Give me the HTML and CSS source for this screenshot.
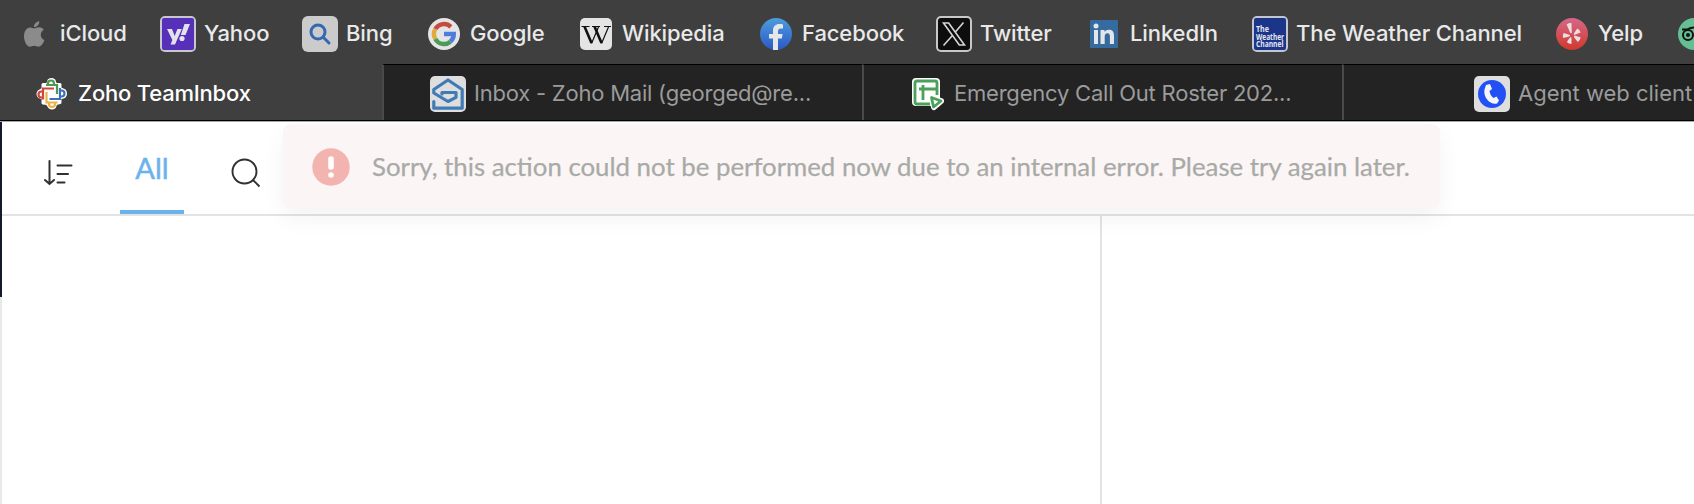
FILE: index.html
```html
<!DOCTYPE html>
<html lang="en">
<head>
<meta charset="utf-8">
<title>Zoho TeamInbox</title>
<link rel="stylesheet" href="styles.css">
</head>
<body>
<nav class="favorites">
  <a class="fav fav-icloud"><svg class="ico" viewBox="0 0 36 36"><path fill="#8b8b8b" d="M23.300 5.200C23.500 8.300 21 11.200 18 11.100C17.700 8.200 20.400 5.400 23.300 5.200ZM18.200 12.500C19.500 12.500 21 11.300 23.200 11.300C25.200 11.300 26.800 12.300 27.800 13.700C23.400 16.300 24 22.100 28.400 24C27.200 27.200 25.200 30.700 22.700 30.700C21 30.700 20.300 29.700 18.300 29.700C16.200 29.700 15.500 30.700 13.900 30.700C10.900 30.700 8 25.200 8 20.200C8 15.200 10.700 11.500 14 11.500C15.800 11.500 17.200 12.500 18.200 12.500Z"/></svg><span>iCloud</span></a>
  <a class="fav fav-yahoo"><svg class="ico" viewBox="0 0 36 36"><rect width="36" height="36" rx="5" fill="#c9c6d0"/><rect x="2" y="2" width="32" height="32" rx="2" fill="#5630b8"/><path fill="#e4e1ec" d="M7 13h5l2.700 7 2.700-7h4.400L15 28.500h-4.500l1.900-4.500zM24.500 8H30l-4.500 11h-4.700z"/><circle cx="22" cy="22.500" r="2.600" fill="#e4e1ec"/></svg><span>Yahoo</span></a>
  <a class="fav fav-bing"><svg class="ico" viewBox="0 0 36 36"><rect width="36" height="36" rx="6" fill="#cbcbcb"/><g fill="none" stroke="#3468b0" stroke-width="3"><circle cx="16" cy="16" r="7"/><path stroke-linecap="round" d="M21 21l6 6"/></g></svg><span>Bing</span></a>
  <a class="fav fav-google"><svg class="ico" viewBox="0 0 36 36"><circle cx="18" cy="18" r="16" fill="#e5e5e5"/><g fill="none" stroke-width="4.400"><path stroke="#c44c3e" d="M24.900 10.800A10 10 0 0 0 9.300 13"/><path stroke="#dfab3d" d="M9.300 13a10 10 0 0 0 0 10"/><path stroke="#4b9b57" d="M9.300 23a10 10 0 0 0 15.100 2.700"/><path stroke="#4f7ddd" d="M24.400 25.700A10 10 0 0 0 27.800 18H18"/></g></svg><span>Google</span></a>
  <a class="fav fav-wikipedia"><svg class="ico" viewBox="0 0 36 36"><rect x="2" y="2" width="32" height="32" rx="5" fill="#e4e4e4"/><g fill="none" stroke="#111"><path stroke-width="1.200" d="M3.500 10.500h8M14 10.500h8M26 10.500h7M13.500 27.500L20.500 11M23.500 27.500L30.500 11"/><path stroke-width="2.600" d="M6.500 10.500l7 16.500M16.500 10.500l7 16.500"/></g></svg><span>Wikipedia</span></a>
  <a class="fav fav-facebook"><svg class="ico" viewBox="0 0 36 36"><defs><linearGradient id="fb" x2="0" y2="1"><stop stop-color="#4c9ddd"/><stop offset="1" stop-color="#2c58c4"/></linearGradient></defs><circle cx="18" cy="18" r="16" fill="url(#fb)"/><path fill="#e5e6e8" d="M15 34V22.500h-4V18h4v-3.500C15 10.300 17.500 8 21.500 8c1.200 0 2.500.2 3.500.4v4h-2.200c-2 0-2.800 1.100-2.800 2.600v3h4.600l-.8 4.500H20V34z"/></svg><span>Facebook</span></a>
  <a class="fav fav-twitter"><svg class="ico" viewBox="0 0 36 36"><rect width="36" height="36" rx="5" fill="#c8c8c8"/><rect x="2" y="2" width="32" height="32" rx="3" fill="#0d0d0d"/><path fill="none" stroke="#d5d5d5" stroke-width="1.600" d="M7.500 7h5.200L28.500 29h-5.200zM27.500 6.500L19.400 16M16.200 19.700L7.500 29.500"/></svg><span>Twitter</span></a>
  <a class="fav fav-linkedin"><svg class="ico" viewBox="0 0 36 36"><rect x="4" y="4" width="28" height="28" rx="1" fill="#356b9f"/><g fill="#e3e6e8"><circle cx="10" cy="10" r="2.500"/><path d="M8 14h4v14H8zM14.500 14h4v2c1-1.600 2.500-2.300 4.300-2.300 4.200 0 5.200 2.700 5.200 6.300v8h-4.100v-7.200c0-2-.4-3.500-2.400-3.500s-2.800 1.500-2.800 3.500V28h-4.200z"/></g></svg><span>LinkedIn</span></a>
  <a class="fav fav-weather"><svg class="ico" viewBox="0 0 36 36"><rect width="36" height="36" rx="5" fill="#c3c6d1"/><rect x="2" y="2" width="32" height="32" rx="2" fill="#1b358b"/><g class="weather-text"><text x="4" y="16" textLength="13" lengthAdjust="spacingAndGlyphs">The</text><text x="4" y="23.500" textLength="28" lengthAdjust="spacingAndGlyphs">Weather</text><text x="4" y="31" textLength="27.500" lengthAdjust="spacingAndGlyphs">Channel</text></g></svg><span>The Weather Channel</span></a>
  <a class="fav fav-yelp"><svg class="ico" viewBox="0 0 36 36"><defs><linearGradient id="yp" x2="0" y2="1"><stop stop-color="#d5688a"/><stop offset="1" stop-color="#d2382c"/></linearGradient></defs><circle cx="18" cy="18" r="16" fill="url(#yp)"/><g fill="#eadfe0"><path d="M12.600 8.500q3-2 4.900-1.300l.3 9.300q-.7 1.300-1.700 0zM9.500 17q-1 2.500-.3 5l6.200-1.600q1.300-.8 0-1.600zM12.800 26q2 1.800 4.700 2v-6q-.5-1.300-1.500-.4zM20 20.500q.2-1.200 1.500-.8l5.300 1.900q-.8 2.900-3 4.300l-3.600-4.400zM19.700 17.800l3.500-5.200q2.500 1.100 3.500 4l-5.800 2.200q-1.400.1-1.200-1z"/></g></svg><span>Yelp</span></a>
  <a class="fav"><svg class="ico" viewBox="0 0 36 36"><circle cx="18" cy="18" r="16" fill="#65bf94"/><g fill="none" stroke="#111" stroke-width="2"><circle cx="12" cy="19" r="5"/><circle cx="24" cy="19" r="5"/><path d="M6 13.500h5q7-4 14 0h5"/></g><circle cx="12" cy="19" r="2" fill="#111"/></svg></a>
</nav>

<div class="tabs">
  <div class="tab tab-active"><svg class="ico" viewBox="0 0 36 36"><path fill="#fff" stroke="#fff" stroke-width="3" stroke-linejoin="round" d="M9 8.500h4.500L15 4.500q2.500-2 5 0l1.500 4H26v4l4.500 2q2 3 0 6L26 22v4.500l-4 1-1.500 3.500q-2.500 2-5 0L13 27.500 9 27v-5l-4-1.500q-2-2.500 0-5L9 13z"/><g fill="none" stroke-width="2.200"><path stroke="#4b9a4f" d="M12 9h11v9M14 8.500V7.500a3 3 0 0 1 6 0v1"/><path stroke="#3f70b9" d="M26 12v11H15.500M26.500 14.500h1a3 3 0 0 1 0 6h-1"/><path stroke="#efb141" d="M23.500 26.500H12.500V16M15 27v1a3 3 0 0 0 6 0v-1"/><path stroke="#d24539" d="M9 23.500V12.500h11M8.500 15.500h-1a3 3 0 0 0 0 6h1"/></g></svg><span class="title title-team">Zoho TeamInbox</span></div>
  <div class="tab"><svg class="ico" viewBox="0 0 36 36"><rect width="36" height="36" rx="5" fill="#dedede"/><path fill="none" stroke="#417bb5" stroke-width="3.200" stroke-linejoin="round" stroke-linecap="round" d="M3.800 25.500v6.700h28.400V13.500L18 4 3.800 13.500V17L18 25.500l8-4.200V16.500H12v1.500"/></svg><span class="title title-mail">Inbox - Zoho Mail (georged@re...</span></div>
  <div class="tab tab-sheet"><svg class="ico" viewBox="0 0 36 36"><rect x="2" y="2" width="28" height="28" rx="4" fill="#fff"/><path fill="#fff" stroke="#fff" stroke-width="6" stroke-linejoin="round" d="M22 22l9 3-7 6z"/><g fill="none" stroke="#4ba05a" stroke-width="2.800" stroke-linejoin="round"><path d="M20 28H7q-2 0-2-2V7q0-2 2-2h18q2 0 2 2v12M13 9v15M9 13h18"/><path d="M21.500 21.500l9.500 3.500-7.500 6z"/></g></svg><span class="title title-sheet">Emergency Call Out Roster 202...</span></div>
  <div class="tab tab-agent"><svg class="ico" viewBox="0 0 36 36"><rect width="36" height="36" rx="5" fill="#dedede"/><circle cx="18" cy="18" r="14" fill="#2350f4"/><path fill="#f4f5fa" d="M12 9l4-1 2 5-2.500 2c.500 3 1.500 5 4 7l3-1.500 2.500 4-2 3c-7 1.500-14-6-12.500-14z"/></svg><span class="title title-agent">Agent web client</span></div>
</div>

<main class="app">
  <div class="rail"></div>
  <div class="content">
    <header class="toolbar">
      <svg class="sort" viewBox="0 0 30 28" fill="none" stroke="#303030" stroke-width="2" stroke-linecap="round"><path d="M5.500 2v23M1 21l4.500 4 4.500-4M13.500 6.500h14M13.500 15h10.500M13.500 23.500h7"/></svg>
      <span class="filter">All</span>
      <svg class="search" viewBox="0 0 30 30" fill="none" stroke="#303030" stroke-width="1.900"><circle cx="13.500" cy="13.500" r="12"/><path d="M22 22l6.500 6.500"/></svg>
    </header>
    <section class="panes"><div class="list"></div><div class="detail"></div></section>
  </div>
  <div class="toast"><svg class="alert" viewBox="0 0 38 38"><circle cx="19" cy="19" r="18.700" fill="#f3b3ae"/><path stroke="#fff" stroke-width="5.600" stroke-linecap="round" d="M19 11v8"/><circle cx="19" cy="27" r="2.800" fill="#fff"/></svg><span class="message">Sorry, this action could not be performed now due to an internal error. Please try again later.</span></div>
</main>
</body>
</html>
```
FILE: styles.css
```css
* { box-sizing: border-box; }
body { margin: 0; height: 504px; overflow: hidden; display: flex; flex-direction: column; background: #fff; font-family: Inter, "Liberation Sans", sans-serif; }
.ico { width: 36px; height: 36px; flex: none; }

.favorites { height: 64px; flex: none; display: flex; align-items: center; padding: 4px 0 0 16px; background: #3f3f3f; color: #e9e9e9; font-size: 22px; font-weight: 500; white-space: nowrap; overflow: hidden; }
.fav { display: flex; align-items: center; flex: none; gap: 8px; letter-spacing: -.1px; }
.fav span { position: relative; top: -1px; }
.fav-icloud { width: 144px; }
.fav-yahoo { width: 142px; }
.fav-bing { width: 124px; }
.fav-google { width: 152px; }
.fav-wikipedia { width: 180px; }
.fav-facebook { width: 178px; }
.fav-twitter { width: 150px; }
.fav-linkedin { width: 166px; }
.fav-weather { width: 302px; }
.fav-yelp { width: 122px; }
.weather-text { font: 700 8px "Open Sans", sans-serif; letter-spacing: 0; fill: #e5e8f0; }

.tabs { height: 58px; flex: none; display: flex; background: #232323; border-bottom: 1px solid #a9a9a9; box-shadow: inset 0 -1px #000; overflow: hidden; }
.tab { width: 480px; height: 56px; flex: none; display: flex; align-items: center; gap: 8px; padding: 2px 0 0 46px; border-top: 1px solid #000; border-left: 2px solid #4a4a4a; color: #9b9b9b; font-size: 22px; white-space: nowrap; }
.tab-active { width: 382px; padding-left: 34px; background: #3f3f3f; border-color: #3f3f3f; border-left: 0; color: #fff; font-weight: 500; }
.tab-agent { padding-left: 130px; }
.title { padding-bottom: 2px; }
.title-team { letter-spacing: -.2px; }
.title-mail { letter-spacing: -.22px; }
.title-sheet { letter-spacing: -.22px; }

.app { position: relative; flex: 1; display: flex; min-height: 0; }
.rail { width: 2px; background: linear-gradient(#121b2c 0 175px, #e9e9e9 175px); }
.content { flex: 1; display: flex; flex-direction: column; }
.toolbar { height: 94px; flex: none; display: flex; align-items: center; padding-left: 42px; border-bottom: 2px solid #e3e3e3; }
.sort { width: 30px; height: 28px; margin-top: 9px; }
.filter { width: 64px; height: 92px; margin: 0 47px 0 46px; border-bottom: 4px solid #6bb3ec; color: #6bb3ec; font: 400 29px/91px Lato, sans-serif; -webkit-text-stroke: .5px #6bb3ec; text-align: center; }
.search { width: 30px; height: 30px; margin-top: 9px; }
.panes { flex: 1; display: flex; }
.list { width: 1100px; border-right: 2px solid #e3e3e3; }
.detail { flex: 1; }

.toast { position: absolute; left: 283px; top: 2px; width: 1157px; height: 84px; display: flex; align-items: center; padding: 1px 0 0 29px; gap: 22px; border-radius: 8px; background: #fbf5f5; box-shadow: 0 10px 24px rgba(0, 0, 0, .05); clip-path: inset(-2px -40px -40px -40px); }
.alert { width: 38px; height: 38px; flex: none; }
.message { padding-bottom: 1px; font: 400 25.8px Lato, sans-serif; color: #a8aaa7; -webkit-text-stroke: .25px #a8aaa7; white-space: nowrap; }
```
